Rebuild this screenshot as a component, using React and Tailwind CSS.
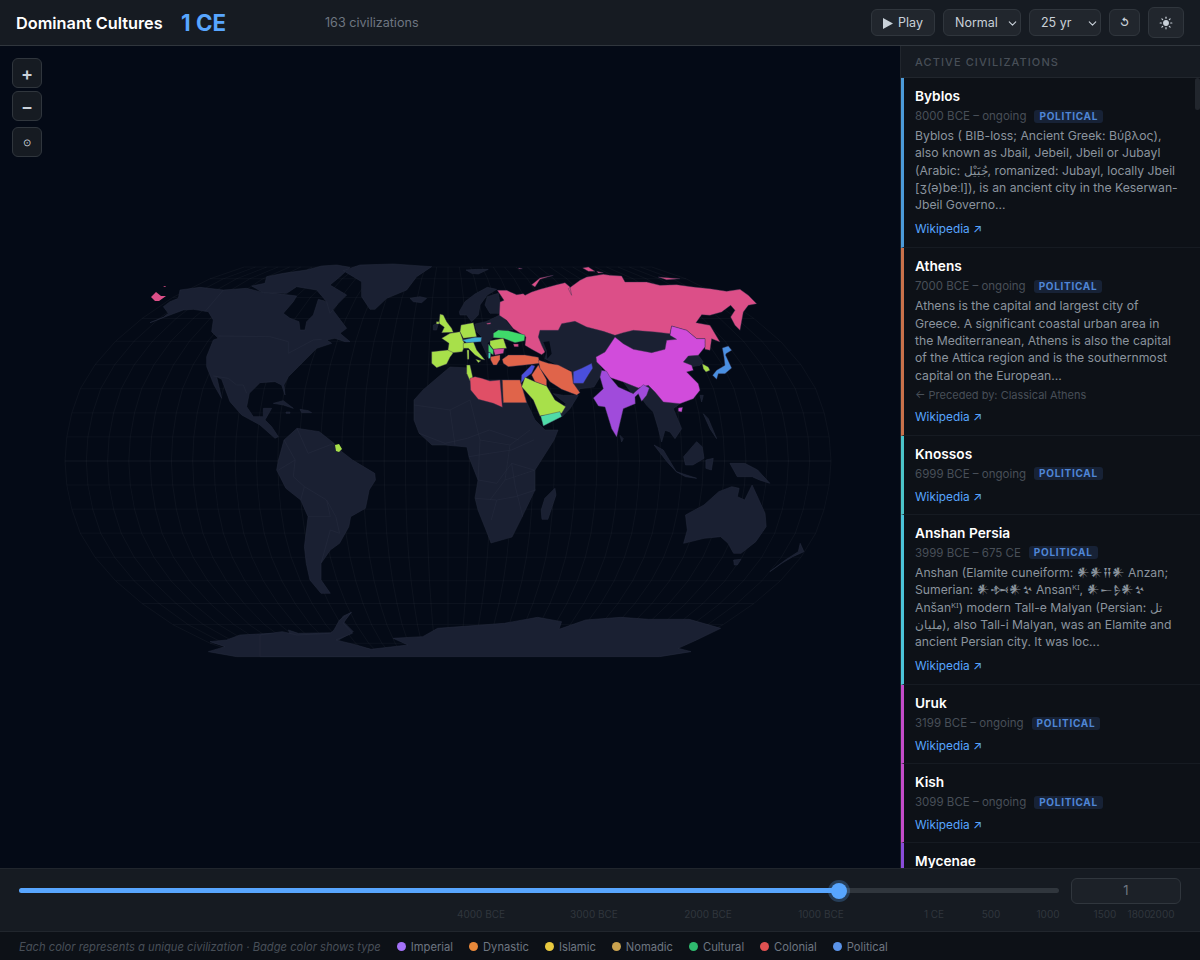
import React from 'react';
import { ChevronDown, Sun } from 'lucide-react';

const LAND = '#1a2032';
const EDGE = '#262c3e';
const SEA = '#040a16';

// landmasses traced per region, each list in its own local coordinates
const NORTH = [
  '0,188 40,172 55,160 40,140 60,125 85,115 90,90 150,82 220,90 290,85 330,95 375,100 440,108 430,125 400,160 420,175 447,185 450,210 465,210 470,185 490,165 505,118 530,125 590,205 570,220 600,245 585,245 555,235 530,240 545,250 500,265 445,320 415,350 402,375 405,405 395,375 375,365 330,368 298,400 290,440 310,470 340,470 340,445 365,445 345,480 365,500 385,530 375,535 330,495 275,465 240,425 215,358 200,350 215,415 192,375 170,320 170,290 190,240 205,235 185,215 190,180 175,155 130,148 100,150 60,165',
  '305,78 345,70 350,50 400,40 470,30 515,18 560,15 600,22 570,50 540,75 590,105 565,130 540,160 530,125 500,90 440,80 410,100 340,98',
  '370,430 400,422 430,445 400,435',
  '450,448 475,452 485,458 455,458',
  '408,456 420,456 420,460 408,460',
];
const NORTH_LINES = [
  '205,228 360,230 415,245 415,280 490,240 515,238',
  '190,348 235,355 260,375 280,375 290,400',
  '165,155 220,90',
];
const GREENLAND = [
  '850,62 900,45 1000,42 1115,50 1070,80 1040,120 980,145 945,178 930,178 905,140 905,95',
  '1050,145 1080,140 1100,145 1085,158 1060,155',
];

const SOUTH = [
  '45,150 50,120 65,60 100,25 160,35 200,70 215,90 250,120 310,160 312,180 295,210 285,265 245,290 240,320 215,370 190,390 165,430 165,480 190,520 165,520 135,480 125,430 120,380 130,290 110,240 70,205',
  '797,205 800,225 778,298 762,298 760,270 770,235',
  '1150,285 1200,255 1240,215 1275,200 1295,205 1290,230 1310,240 1330,195 1365,280 1368,320 1340,365 1300,400 1280,400 1265,370 1245,350 1200,355 1145,370 1155,330',
  '1280,420 1300,418 1290,435 1282,435',
  '1378,455 1410,430 1440,410 1470,395 1460,370 1455,395 1420,420',
  '1270,130 1310,130 1345,150 1378,190 1350,180 1330,170 1290,170',
  '1065,75 1090,90 1125,155 1100,125',
  '1125,155 1180,175 1150,170',
  '1145,110 1180,65 1195,80 1200,115 1170,135 1150,135',
  '1205,120 1225,115 1220,150 1205,145',
  '0,645 60,635 100,645 190,640 200,630 215,600 245,578 225,610 250,640 205,660 260,675 300,688 400,675 360,655 440,650 480,625 600,615 660,610 750,592 815,605 808,628 880,600 975,592 1050,598 1160,598 1245,625 1180,660 1130,685 1165,695 1080,710 0,710',
];
const SOUTH_LINES = [
  '65,60 95,120 50,150', '100,25 130,100 200,70', '95,120 90,170 120,200 180,240 190,290 130,290',
  '180,240 205,290 215,340 190,330 165,430', '120,200 110,240',
  '430,40 500,70 560,55 620,30 700,60', '565,110 620,100 680,90 740,60',
  '590,180 640,190 680,130 740,150', '582,235 640,240 690,230 745,210', '625,300 640,240', '680,130 690,200 710,290',
];
const ANT_WEST = '115,155 165,140 120,125 170,120 210,105 300,100 360,100 355,90 385,100 490,98 515,85 505,70 520,48 545,37 520,65 550,95 515,115 495,125 600,148 600,170 200,170';

const AFRICA = '450,367 470,368 472,380 490,380 520,380 527,403 535,420 545,430 558,430 554,440 535,470 535,490 522,517 512,537 491,543 486,530 478,510 475,498 478,480 469,457 467,447 445,445 432,445 419,433 414,420 414,400 423,390 437,378';
const AFRICA_LINES = [
  '414,405 450,410 470,400', '450,410 455,445', '470,400 480,440 510,445 530,430', '480,440 478,480', '510,445 505,480 535,470', '505,480 490,500',
];

const EUROPE_DARK = [
  '178,185 195,155 225,132 262,112 290,118 262,135 240,165 235,195 215,215 200,195 180,195',
  '262,140 295,130 305,190 270,190 255,165',
  '100,225 115,220 110,240 100,240',
  '198,60 230,58 265,58 235,72 215,70',
  '225,222 258,215 300,195 320,215 340,240 285,240 280,262 262,280 264,322 245,280 245,260 230,245',
];

const ASIA_DARK = [
  '145,205 215,185 255,178 290,195 340,208 375,220 400,212 430,205 495,210 540,215 560,232 530,235 525,262 485,272 430,262 400,245 375,225 365,240 345,270 318,285 320,300 335,320 330,345 312,375 270,380 262,398 250,365 245,325 205,310 165,290 170,270 155,250 145,225',
  '400,360 445,378 475,370 495,390 520,420 570,425 550,440 575,500 555,530 540,510 525,505 515,540 505,500 490,450 470,430 445,395 430,400',
  '580,300 595,282 625,280 640,300 630,310 600,315',
  '190,395 220,400 265,400 240,440 215,465 208,445 228,425',
  '630,400 640,400 635,420',
  '390,520 400,530 395,540',
  '640,455 655,470 680,530 660,500',
];
const CASPIAN = '160,240 178,238 185,275 172,290 170,265';

const RUSSIA = '22,85 50,85 80,98 100,95 105,100 125,90 150,82 200,68 225,62 240,75 245,100 235,80 270,55 290,45 340,37 360,40 395,42 405,60 470,60 510,70 560,68 610,75 660,80 710,88 750,82 775,100 800,125 775,130 760,150 750,205 735,190 722,165 735,145 722,130 695,150 660,160 635,158 618,182 660,190 690,240 665,230 660,265 645,262 645,230 620,230 590,205 545,192 540,215 495,210 430,205 400,212 375,220 340,208 290,195 255,178 215,185 205,205 150,205 145,225 155,250 165,270 155,278 125,262 105,250 108,225 70,200 50,175 28,160 30,120 42,115';

const ASIA = [
  ['#dc4f88', RUSSIA],
  ['#dc4f88', '125,68 150,48 190,40 150,52 135,75'],
  ['#dc4f88', '278,18 295,15 315,28 295,28'],
  ['#dc4f88', '320,28 340,32 325,33'],
  ['#dc4f88', '505,45 540,48 570,50 530,53'],
  ['#dc4f88', '85,18 97,20 88,21'],
  ['#d14cdb', '318,285 345,270 365,240 375,225 400,245 430,262 485,272 525,262 530,235 560,232 540,220 545,192 590,205 620,230 645,230 645,255 625,280 595,282 580,300 605,310 610,325 590,330 625,365 630,385 610,410 570,425 520,420 495,390 475,370 445,378 400,360 355,345 345,325 320,300'],
  ['#d14cdb', '565,438 578,436 575,450 565,448'],
  ['#a04bdb', '310,408 340,380 330,345 335,325 350,328 360,345 385,375 430,395 435,390 460,368 478,378 470,400 455,418 445,395 435,405 436,425 400,440 380,525 365,500 345,435 325,432'],
  ['#4a90e2', '697,258 715,252 725,265 708,275 707,280 725,318 705,335 685,335 680,352 668,340 680,325 705,310 702,285'],
  ['#a8e04a', '637,305 655,315 660,325 648,330 640,320'],
];

const NEAR = [
  ['#a8e04a', '45,42 55,45 65,65 80,85 85,97 50,98 58,82 42,70'],
  ['#a8e04a', '34,65 42,65 42,72 34,72'],
  ['#a8e04a', '50,115 75,100 105,95 112,115 120,135 112,155 85,158 68,155 72,130'],
  ['#a8e04a', '108,75 145,68 155,110 115,115 105,95'],
  ['#a8e04a', '115,130 145,125 155,150 180,180 170,178 150,165 130,145 115,145'],
  ['#a8e04a', '126,150 132,150 132,178 127,178'],
  ['#a8e04a', '152,178 168,182 160,188'],
  ['#a8e04a', '20,155 68,150 85,158 75,172 65,192 35,203 20,190'],
  ['#3fb0d8', '112,120 150,112 170,112 168,125 125,128'],
  ['#3fdb6a', '205,100 220,90 250,92 300,105 298,122 270,128 235,115 205,113'],
  ['#a8e04a', '195,122 235,115 245,145 205,148 195,135'],
  ['#d14c9b', '205,148 238,145 235,160 210,165'],
  ['#3fdb6a', '190,132 205,150 205,165 190,155'],
  ['#3fd8c0', '190,158 197,158 197,175 190,175'],
  ['#e0644a', '197,170 225,165 225,178 215,195 205,195 197,180'],
  ['#dc4f88', '185,70 197,68 197,72 186,73'],
  ['#dc4f88', '265,132 280,132 280,140 268,140'],
  ['#e0644a', '232,178 250,165 300,165 340,172 345,190 300,195 250,200 235,190'],
  ['#a8e04a', '125,195 135,195 145,240 135,243 125,220'],
  ['#e04f66', '135,235 150,230 170,235 195,243 225,240 232,322 205,310 160,298 137,270'],
  ['#e0644a', '232,240 285,240 305,308 235,308'],
  ['#4a4fdc', '290,225 320,195 330,198 320,220 300,235 288,250'],
  ['#e0644a', '320,225 340,195 365,240 365,258 330,245'],
  ['#a8e04a', '290,260 300,232 330,245 365,258 390,300 422,320 410,340 345,348 325,300'],
  ['#4fdba8', '347,348 405,335 410,350 355,378'],
  ['#e0644a', '340,180 370,190 400,195 440,215 445,250 465,278 455,285 410,268 375,245 345,205'],
  ['#4a4fdc', '445,215 470,205 500,190 503,205 490,225 475,250 445,250'],
];

// Robinson table, every 10 degrees of latitude
const ROB = [[1, 0], [0.9954, 0.124], [0.9822, 0.248], [0.96, 0.372], [0.9216, 0.4958], [0.8679, 0.6176], [0.7986, 0.7346], [0.7186, 0.8435], [0.6213, 0.9394], [0.5322, 1]];
const CX = 448;
const CY = 461;
const HW = 383;
const HH = 194;

function meridian(lon) {
  const top = ROB.map(([w, h]) => `${(CX + (lon / 180) * HW * w).toFixed(1)},${(CY - HH * h).toFixed(1)}`);
  const bottom = ROB.map(([w, h]) => `${(CX + (lon / 180) * HW * w).toFixed(1)},${(CY + HH * h).toFixed(1)}`);
  return [...top.reverse(), ...bottom.slice(1)].join(' ');
}

function Polys({ list, transform }) {
  return (
    <g transform={transform} strokeWidth="1.5">
      {list.map((p) => <polygon key={p} points={p} />)}
    </g>
  );
}

function Lines({ list, transform }) {
  return (
    <g transform={transform} strokeWidth="1.5">
      {list.map((p) => <polyline key={p} points={p} />)}
    </g>
  );
}

const T_NORTH = 'translate(150 260) scale(0.3333)';
const T_SOUTH = 'translate(260 420) scale(0.37 0.3333)';
const T_EUR = 'translate(400 250) scale(0.3333)';
const T_ASIA = 'translate(490 262) scale(0.3333)';
const T_NEAR = 'translate(425 300) scale(0.3333)';

function WorldMap() {
  const lons = [];
  for (let l = -180; l <= 180; l += 10) lons.push(l);
  return (
    <svg viewBox="0 46 900 822" className="block w-full h-full">
      <g fill="none" stroke="#ffffff" strokeOpacity="0.05" strokeWidth="0.7">
        {lons.map((l) => <polyline key={l} points={meridian(l)} />)}
        {ROB.flatMap(([w, h], i) => [1, -1].map((s) => (
          <line key={`${i}${s}`} x1={CX - HW * w} x2={CX + HW * w} y1={CY + s * HH * h} y2={CY + s * HH * h} />
        )))}
      </g>
      <g fill={LAND} stroke={EDGE} strokeWidth="0.5">
        <polygon points={AFRICA} />
        <Polys list={[ANT_WEST]} transform="translate(170 600) scale(0.3333)" />
        <Polys list={NORTH} transform={T_NORTH} />
        <Polys list={GREENLAND} transform="translate(60 250) scale(0.3333)" />
        <Polys list={SOUTH} transform={T_SOUTH} />
        <Polys list={EUROPE_DARK} transform={T_EUR} />
        <Polys list={ASIA_DARK} transform={T_ASIA} />
      </g>
      <polygon points={CASPIAN} fill={SEA} transform={T_ASIA} />
      <g fill="none" stroke={EDGE} strokeWidth="0.5">
        {AFRICA_LINES.map((p) => <polyline key={p} points={p} />)}
        <Lines list={NORTH_LINES} transform={T_NORTH} />
        <Lines list={SOUTH_LINES} transform={T_SOUTH} />
      </g>
      <g transform={T_ASIA} stroke="#3c3250" strokeWidth="1.2">
        {ASIA.map(([c, p]) => <polygon key={p} points={p} fill={c} />)}
      </g>
      <g transform={T_NEAR} stroke="#3c3250" strokeWidth="1.2">
        {NEAR.map(([c, p]) => <polygon key={p} points={p} fill={c} />)}
      </g>
      <polygon points="151,297 156,292 161,296 166,296 159,301 155,301" fill="#dc4f88" />
      <polygon points="163,286 166,286 165,287" fill="#dc4f88" />
      <polygon points="335,445 339,444 342,449 339,452 336,451" fill="#a8e04a" />
    </svg>
  );
}

const SELECT_CLS = 'flex items-center justify-between h-[27px] rounded-md border border-[#30363d] bg-[#21262d] text-[12.5px] text-[#c9d1d9] pl-[11px] pr-[1px] pt-[1px]';

function Header() {
  return (
    <header className="h-[46px] shrink-0 flex items-center bg-[#161b22] border-b border-[#30363d] pl-[16px] pr-[16px]">
      <h1 className="text-[16.3px] font-semibold text-white w-[165px] pt-[2px]">Dominant Cultures</h1>
      <div className="text-[22.3px] font-bold text-[#58a6ff] w-[144px] pt-[1px]">1 CE</div>
      <div className="text-[12.6px] text-[#6e7681] pt-[2px]">163 civilizations</div>
      <div className="ml-auto flex items-center gap-2">
        <button className="flex items-center gap-[5px] h-[27px] w-[64px] justify-center rounded-md border border-[#30363d] bg-[#21262d] text-[12.5px] text-[#c9d1d9] pt-[1px]">
          <svg width="10" height="11" viewBox="0 0 10 11" className="block">
            <polygon points="0,0 10,5.5 0,11" fill="currentColor" />
          </svg>
          Play
        </button>
        <div className={`${SELECT_CLS} w-[78px]`}>
          Normal
          <ChevronDown size={13} className="text-[#c9d1d9]" />
        </div>
        <div className={`${SELECT_CLS} w-[72px]`}>
          25 yr
          <ChevronDown size={13} className="text-[#c9d1d9]" />
        </div>
        <button className="flex items-center justify-center h-[27px] w-[31px] rounded-md border border-[#30363d] bg-[#21262d] text-[10px] font-bold text-[#c9d1d9]">↺</button>
        <button className="flex items-center justify-center h-[31px] w-[36px] rounded-md border border-[#30363d] bg-[#21262d] text-[#c9d1d9]">
          <Sun size={14} fill="currentColor" />
        </button>
      </div>
    </header>
  );
}

const ZOOM_BTN = 'flex items-center justify-center w-[30px] h-[30px] rounded-md border border-[#30363d] bg-[#161b22] text-[#c9d1d9]';

function ZoomControls() {
  return (
    <div className="absolute left-[12px] top-[12px] flex flex-col">
      <button className={`${ZOOM_BTN} text-[18px] font-semibold`}>+</button>
      <button className={`${ZOOM_BTN} text-[18px] font-semibold mt-[3px]`}>−</button>
      <button className={`${ZOOM_BTN} text-[10px] mt-[6px]`}>⊙</button>
    </div>
  );
}

const CIVS = [
  {
    name: 'Byblos', dates: '8000 BCE – ongoing', color: '#4c9bd9',
    desc: 'Byblos ( BIB-loss; Ancient Greek: Βύβλος), also known as Jbail, Jebeil, Jbeil or Jubayl (Arabic: جُبَيْل, romanized: Jubayl, locally Jbeil [ʒ(ə)beːl]), is an ancient city in the Keserwan-Jbeil Governo...',
  },
  {
    name: 'Athens', dates: '7000 BCE – ongoing', color: '#c9714a',
    desc: 'Athens is the capital and largest city of Greece. A significant coastal urban area in the Mediterranean, Athens is also the capital of the Attica region and is the southernmost capital on the European...',
    prev: '← Preceded by: Classical Athens',
  },
  { name: 'Knossos', dates: '6999 BCE – ongoing', color: '#4cc4c9' },
  {
    name: 'Anshan Persia', dates: '3999 BCE – 675 CE', color: '#4cc4d9',
    desc: 'Anshan (Elamite cuneiform: 𒀭𒀭𒍝𒀭 Anzan; Sumerian: 𒀭𒁔𒀭𒆳 Ansanᴷᴵ, 𒀭𒀸𒊩𒀭𒆳 Anšanᴷᴵ) modern Tall-e Malyan (Persian: تل ملیان), also Tall-i Malyan, was an Elamite and ancient Persian city. It was loc...',
  },
  { name: 'Uruk', dates: '3199 BCE – ongoing', color: '#c44cc9' },
  { name: 'Kish', dates: '3099 BCE – ongoing', color: '#c44cc9' },
  { name: 'Mycenae', dates: '', color: '#8a4cd9' },
];

function CivCard({ civ }) {
  return (
    <div className={`shrink-0 border-l-[3px] border-b border-b-[#161b22] pl-[11px] pr-[20px] pt-[9px] ${civ.desc ? 'pb-[10px]' : 'pb-[9px]'}`} style={{ borderLeftColor: civ.color }}>
      <div className="text-[13.7px] leading-[19px] font-semibold text-white">{civ.name}</div>
      {civ.dates && (
        <div className="flex items-center gap-[8px] mt-[2px] text-[11.5px] leading-[16px] text-[#484f58]">
          {civ.dates}
          <span className="rounded-[3px] bg-[#172236] px-[5px] text-[10px] leading-[13px] font-bold tracking-[0.7px] text-[#4f86d6]">POLITICAL</span>
        </div>
      )}
      {civ.desc && <p className="mt-[3px] text-[12.2px] leading-[17.3px] text-[#8b949e]">{civ.desc}</p>}
      {civ.prev && <div className="mt-[3px] text-[11px] leading-[16px] text-[#484f58]">{civ.prev}</div>}
      {civ.dates && (
        <div className={`${civ.prev ? 'mt-[6px]' : civ.desc ? 'mt-[8px]' : 'mt-[7px]'} text-[11.8px] leading-[16px] text-[#58a6ff]`}>Wikipedia ↗</div>
      )}
    </div>
  );
}

function Sidebar() {
  return (
    <aside className="relative w-[300px] shrink-0 flex flex-col overflow-hidden bg-[#0d1117] border-l border-[#21262d]">
      <div className="h-[32px] shrink-0 flex items-center pl-[14px] pt-[1px] bg-[#161b22] border-b border-[#21262d] text-[11px] font-medium tracking-[1.1px] text-[#484f58]">
        ACTIVE CIVILIZATIONS
      </div>
      {CIVS.map((c) => <CivCard key={c.name} civ={c} />)}
      <div className="absolute right-0 top-[32px] w-[5px] h-[32px] rounded-sm bg-[#21262d]" />
    </aside>
  );
}

const TICKS = [
  ['4000 BCE', 481], ['3000 BCE', 594], ['2000 BCE', 708], ['1000 BCE', 821], ['1 CE', 934],
  ['500', 991], ['1000', 1048], ['1500', 1105], ['1800', 1139], ['2000', 1162],
];

function Timeline() {
  return (
    <div className="relative h-[64px] shrink-0 bg-[#161b22] border-t border-[#21262d] border-b px-[19px]">
      <div className="flex items-center gap-[12px] h-[43px]">
        <div className="relative w-[1040px] h-[5px] rounded-full bg-[#30363d]">
          <div className="h-full rounded-full bg-[#58a6ff]" style={{ width: 820 }} />
          <div className="absolute top-1/2 left-[820px] -translate-x-1/2 -translate-y-1/2 w-[16px] h-[16px] rounded-full bg-[#58a6ff] ring-[3px] ring-[#58a6ff]/25" />
        </div>
        <div className="w-[110px] h-[26px] flex items-center justify-center rounded-md border border-[#30363d] bg-[#1c2128] text-[13px] text-[#6e7681]">1</div>
      </div>
      {TICKS.map(([label, x]) => (
        <span key={label} className="absolute top-[38px] -translate-x-1/2 text-[10px] leading-[14px] text-[#30363d]" style={{ left: x }}>{label}</span>
      ))}
    </div>
  );
}

const LEGEND = [
  ['Imperial', '#a371f7'], ['Dynastic', '#e8883a'], ['Islamic', '#e8c93f'], ['Nomadic', '#c9a24f'],
  ['Cultural', '#2fb96e'], ['Colonial', '#e05252'], ['Political', '#5a93e8'],
];

function Legend() {
  return (
    <footer className="h-[28px] shrink-0 flex items-center bg-[#0d1117] pl-[19px] pt-[2px]">
      <span className="italic text-[11.2px] text-[#484f58] mr-[16px]">Each color represents a unique civilization · Badge color shows type</span>
      <div className="flex items-center gap-[16px] text-[11.2px]">
        {LEGEND.map(([label, c]) => (
          <span key={label} className="flex items-center gap-[5px] text-[#6e7681]">
            <span className="w-[9px] h-[9px] rounded-full" style={{ background: c }} />
            {label}
          </span>
        ))}
      </div>
    </footer>
  );
}

export default function App() {
  return (
    <div className="w-[1200px] h-[960px] flex flex-col overflow-hidden bg-[#040a16] font-['Inter','Noto_Sans',sans-serif]">
      <Header />
      <div className="flex-1 min-h-0 flex">
        <main className="relative flex-1 min-w-0">
          <WorldMap />
          <ZoomControls />
        </main>
        <Sidebar />
      </div>
      <Timeline />
      <Legend />
    </div>
  );
}
